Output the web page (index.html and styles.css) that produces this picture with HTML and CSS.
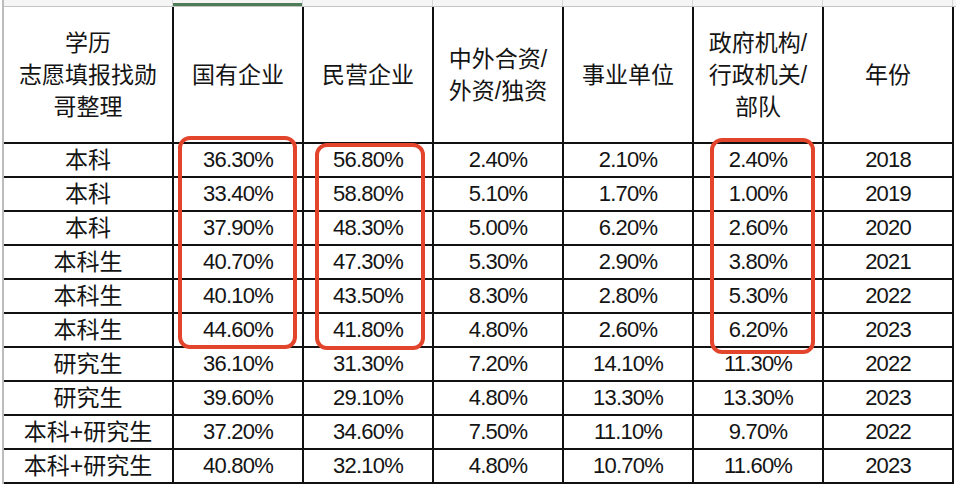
FILE: index.html
```html
<!DOCTYPE html>
<html lang="zh-CN">
<head>
<meta charset="utf-8">
<title>就业去向</title>
<link rel="stylesheet" href="styles.css">
</head>
<body>
<div class="sheet">
  <div class="strip">
    <div class="sc sc-a"></div>
    <div class="sc sc-sel"></div>
    <div class="sc"></div>
    <div class="sc"></div>
    <div class="sc"></div>
    <div class="sc"></div>
    <div class="sc"></div>
  </div>
  <div class="grid-wrap">
    <table class="grid">
      <colgroup>
        <col class="c-a"><col class="c-n"><col class="c-n"><col class="c-n"><col class="c-n"><col class="c-n"><col class="c-n">
      </colgroup>
      <thead>
        <tr class="head">
          <th class="first">学历<br>志愿填报找勋<br>哥整理</th>
          <th>国有企业</th>
          <th>民营企业</th>
          <th>中外合资/<br>外资/独资</th>
          <th>事业单位</th>
          <th>政府机构/<br>行政机关/<br>部队</th>
          <th>年份</th>
        </tr>
      </thead>
      <tbody>
        <tr><td class="first">本科</td><td>36.30%</td><td>56.80%</td><td>2.40%</td><td>2.10%</td><td>2.40%</td><td>2018</td></tr>
        <tr><td class="first">本科</td><td>33.40%</td><td>58.80%</td><td>5.10%</td><td>1.70%</td><td>1.00%</td><td>2019</td></tr>
        <tr><td class="first">本科</td><td>37.90%</td><td>48.30%</td><td>5.00%</td><td>6.20%</td><td>2.60%</td><td>2020</td></tr>
        <tr><td class="first">本科生</td><td>40.70%</td><td>47.30%</td><td>5.30%</td><td>2.90%</td><td>3.80%</td><td>2021</td></tr>
        <tr><td class="first">本科生</td><td>40.10%</td><td>43.50%</td><td>8.30%</td><td>2.80%</td><td>5.30%</td><td>2022</td></tr>
        <tr><td class="first">本科生</td><td>44.60%</td><td>41.80%</td><td>4.80%</td><td>2.60%</td><td>6.20%</td><td>2023</td></tr>
        <tr><td class="first">研究生</td><td>36.10%</td><td>31.30%</td><td>7.20%</td><td>14.10%</td><td>11.30%</td><td>2022</td></tr>
        <tr><td class="first">研究生</td><td>39.60%</td><td>29.10%</td><td>4.80%</td><td>13.30%</td><td>13.30%</td><td>2023</td></tr>
        <tr><td class="first">本科+研究生</td><td>37.20%</td><td>34.60%</td><td>7.50%</td><td>11.10%</td><td>9.70%</td><td>2022</td></tr>
        <tr><td class="first">本科+研究生</td><td>40.80%</td><td>32.10%</td><td>4.80%</td><td>10.70%</td><td>11.60%</td><td>2023</td></tr>
      </tbody>
    </table>
    <div class="mark mark-1"></div>
    <div class="mark mark-2"></div>
    <div class="mark mark-3"></div>
  </div>
</div>
</body>
</html>
```

FILE: styles.css
```css
html, body {
  margin: 0;
  padding: 0;
  background: #ffffff;
}

body {
  width: 956px;
  height: 484px;
  overflow: hidden;
  font-family: "Liberation Sans", "Noto Sans CJK SC", sans-serif;
  color: #141414;
}

.sheet {
  margin-left: 2px;
  border-left: 2px solid #bdbdbd;
  height: 484px;
}

.strip {
  display: flex;
  height: 6px;
  background: #f5f5f5;
  border-bottom: 1px solid #c4c4c4;
}

.sc {
  flex: 0 0 130px;
  box-sizing: border-box;
  border-right: 1px solid #d6d6d6;
}

.sc-a {
  flex-basis: 169px;
}

.sc-sel {
  background: linear-gradient(to bottom, transparent 3px, #4e7c57 3px);
}

.grid-wrap {
  position: relative;
}

.grid {
  border-collapse: collapse;
  table-layout: fixed;
  width: 949px;
}

.c-a { width: 169px; }
.c-n { width: 130px; }

.grid th,
.grid td {
  border: 2px solid #111111;
  padding: 0;
  text-align: center;
  vertical-align: middle;
  font-weight: normal;
}

.grid th {
  font-size: 23px;
  line-height: 32px;
}

.grid thead th {
  border-top: none;
}

.grid .first {
  border-left: none;
}

.head {
  height: 136px;
}

.grid tbody tr {
  height: 34px;
}

.grid td {
  font-size: 22px;
  line-height: 28px;
  letter-spacing: -0.8px;
}

.grid td.first {
  font-size: 23px;
  letter-spacing: 0;
}

.mark {
  position: absolute;
  box-sizing: border-box;
  border: 4px solid #e2452c;
  border-radius: 12px;
}

.mark-1 {
  left: 174px;
  top: 129px;
  width: 119px;
  height: 213px;
}

.mark-2 {
  left: 311px;
  top: 136px;
  width: 110px;
  height: 207px;
}

.mark-3 {
  left: 706px;
  top: 131px;
  width: 105px;
  height: 216px;
}
```
